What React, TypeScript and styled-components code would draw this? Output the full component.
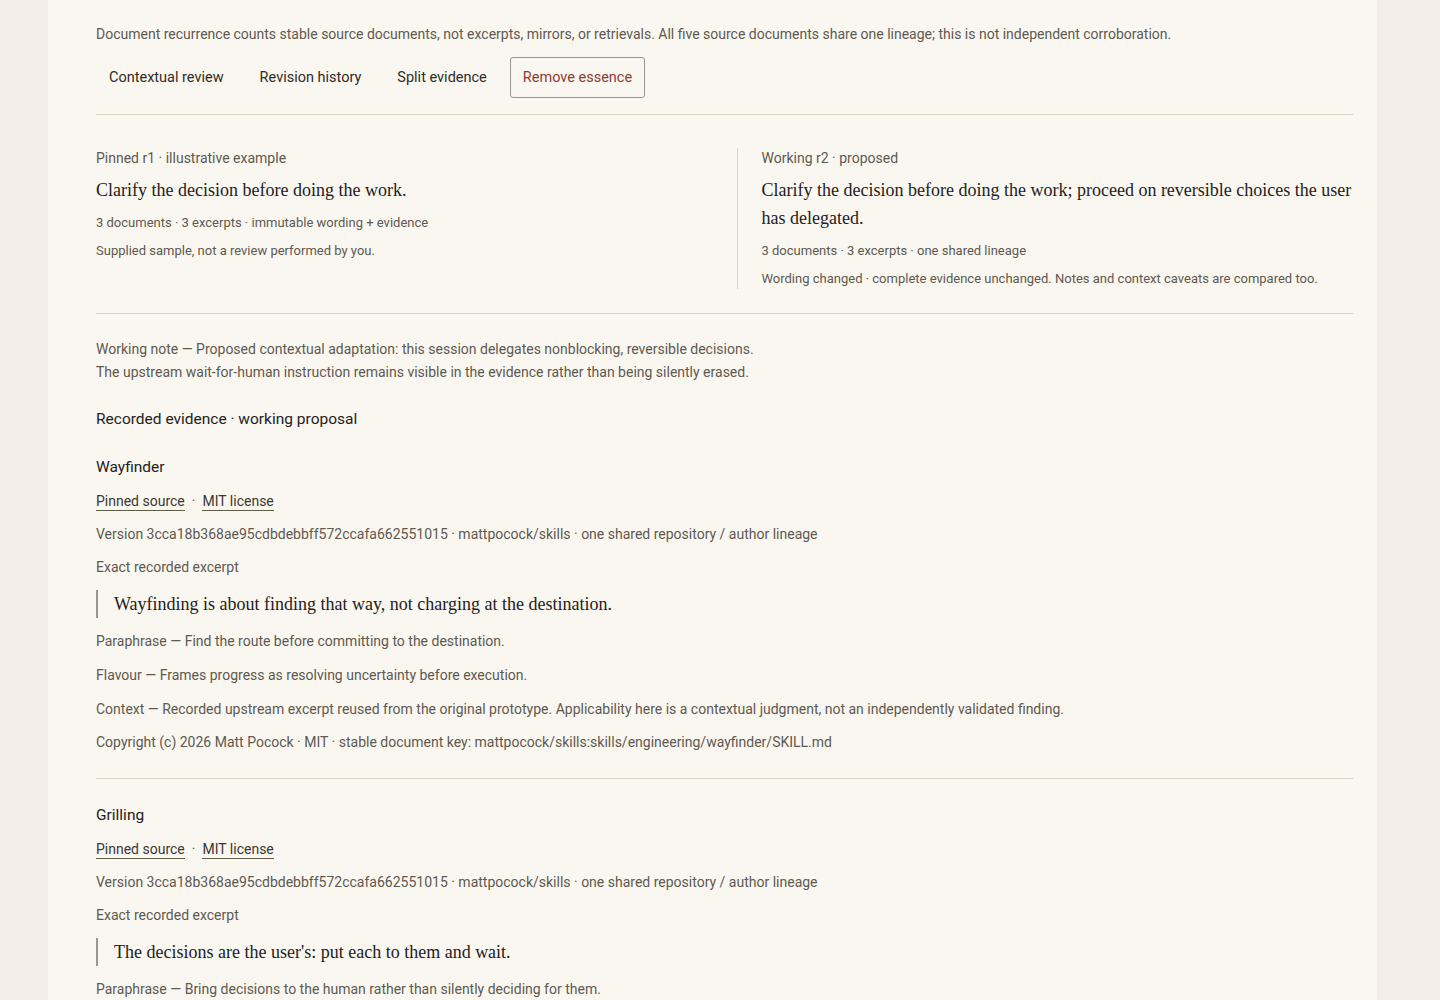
import styled, { createGlobalStyle } from "styled-components";

const GlobalStyle = createGlobalStyle`
  html, body {
    margin: 0;
    padding: 0;
    background: #f3efe8;
  }
  body {
    font-family: Roboto, "Liberation Sans", Arial, sans-serif;
    color: #2b2823;
  }
`;

const Page = styled.div`
  padding: 0 63px 48px 48px;
`;

const Card = styled.main`
  background: #faf7f0;
  padding: 24px 24px 48px 48px;
`;

const Lede = styled.p`
  margin: 0;
  font-size: 14px;
  line-height: 21px;
  color: #5e5951;
`;

const Toolbar = styled.div`
  display: flex;
  gap: 10px;
  padding: 12px 0 16px;
  border-bottom: 1px solid #d9d3c6;
`;

const Tab = styled.button<{ $danger?: boolean }>`
  font-family: inherit;
  font-size: 14.5px;
  line-height: 21px;
  padding: 9px 12px;
  background: transparent;
  border: 1px solid ${(p) => (p.$danger ? "#9c968a" : "transparent")};
  border-radius: 3px;
  color: ${(p) => (p.$danger ? "#8e3b30" : "#2f2b25")};
  cursor: pointer;
`;

const Compare = styled.section`
  display: grid;
  grid-template-columns: 1fr 1fr;
  gap: 24px;
  padding: 32.5px 0 24px;
  border-bottom: 1px solid #d9d3c6;
`;

const Revision = styled.div<{ $working?: boolean }>`
  display: flex;
  flex-direction: column;
  gap: 7.5px;
  ${(p) =>
    p.$working &&
    `
    border-left: 1px solid #d9d3c6;
    padding-left: 24px;
  `}
`;

const Small = styled.div<{ $meta?: boolean }>`
  font-size: ${(p) => (p.$meta ? "13px" : "14px")};
  line-height: 21px;
  color: #5e5951;
`;

const Wording = styled.div`
  font-family: "Liberation Serif", "Times New Roman", serif;
  font-size: 18px;
  line-height: 28px;
  color: #24211d;
`;

const Note = styled.div`
  padding: 24px 0 0;
  font-size: 14px;
  line-height: 23px;
  color: #5e5951;
`;

const SectionTitle = styled.h2`
  margin: 23px 0 0;
  font-size: 15.5px;
  line-height: 24px;
  font-weight: 400;
  color: #24211d;
`;

const Source = styled.article<{ $last?: boolean }>`
  display: flex;
  flex-direction: column;
  gap: 12px;
  padding: 24px 0 25px;
  border-bottom: ${(p) => (p.$last ? "none" : "1px solid #d9d3c6")};
`;

const SourceName = styled.h3`
  margin: 0;
  font-size: 15.5px;
  line-height: 24px;
  font-weight: 400;
  color: #24211d;
`;

const Links = styled.div`
  font-size: 14px;
  line-height: 21px;
  color: #5e5951;
`;

const Link = styled.a`
  color: #3b3830;
  text-decoration: none;
  border-bottom: 1px solid #5d5e44;
  padding-bottom: 1px;
`;

const Dot = styled.span`
  margin: 0 7px;
`;

const Line = styled.div<{ $loose?: boolean }>`
  font-size: 14px;
  line-height: ${(p) => (p.$loose ? "22px" : "21px")};
  color: #5e5951;
`;

const Quote = styled.blockquote`
  margin: 0;
  padding: 0 0 0 16px;
  border-left: 2px solid #9c968a;
  font-family: "Liberation Serif", "Times New Roman", serif;
  font-size: 18px;
  line-height: 28px;
  color: #24211d;
`;

type SourceData = {
  name: string;
  excerpt: string;
  paraphrase: string;
  flavour: string;
  context: string;
  key: string;
};

const version =
  "Version 3cca18b368ae95cdbdebbff572ccafa662551015 · mattpocock/skills · one shared repository / author lineage";

const sources: SourceData[] = [
  {
    name: "Wayfinder",
    excerpt: "Wayfinding is about finding that way, not charging at the destination.",
    paraphrase: "Find the route before committing to the destination.",
    flavour: "Frames progress as resolving uncertainty before execution.",
    context:
      "Recorded upstream excerpt reused from the original prototype. Applicability here is a contextual judgment, not an independently validated finding.",
    key: "mattpocock/skills:skills/engineering/wayfinder/SKILL.md",
  },
  {
    name: "Grilling",
    excerpt: "The decisions are the user's: put each to them and wait.",
    paraphrase: "Bring decisions to the human rather than silently deciding for them.",
    flavour: "Treats every open question as something the user must settle.",
    context:
      "Recorded upstream excerpt reused from the original prototype. Applicability here is a contextual judgment, not an independently validated finding.",
    key: "mattpocock/skills:skills/engineering/grilling/SKILL.md",
  },
];

function App() {
  return (
    <Page>
      <GlobalStyle />
      <Card>
        <Lede>
          Document recurrence counts stable source documents, not excerpts, mirrors, or retrievals. All
          five source documents share one lineage; this is not independent corroboration.
        </Lede>
        <Toolbar>
          <Tab>Contextual review</Tab>
          <Tab>Revision history</Tab>
          <Tab>Split evidence</Tab>
          <Tab $danger>Remove essence</Tab>
        </Toolbar>
        <Compare>
          <Revision>
            <Small>Pinned r1 · illustrative example</Small>
            <Wording>Clarify the decision before doing the work.</Wording>
            <Small $meta>3 documents · 3 excerpts · immutable wording + evidence</Small>
            <Small $meta>Supplied sample, not a review performed by you.</Small>
          </Revision>
          <Revision $working>
            <Small>Working r2 · proposed</Small>
            <Wording>
              Clarify the decision before doing the work; proceed on reversible choices the user has
              delegated.
            </Wording>
            <Small $meta>3 documents · 3 excerpts · one shared lineage</Small>
            <Small $meta>
              Wording changed · complete evidence unchanged. Notes and context caveats are compared too.
            </Small>
          </Revision>
        </Compare>
        <Note>
          Working note — Proposed contextual adaptation: this session delegates nonblocking, reversible
          decisions.
          <br />
          The upstream wait-for-human instruction remains visible in the evidence rather than being
          silently erased.
        </Note>
        <SectionTitle>Recorded evidence · working proposal</SectionTitle>
        {sources.map((s, i) => (
          <Source key={s.name} $last={i === sources.length - 1}>
            <SourceName>{s.name}</SourceName>
            <Links>
              <Link href="#">Pinned source</Link>
              <Dot>·</Dot>
              <Link href="#">MIT license</Link>
            </Links>
            <Line>{version}</Line>
            <Line>Exact recorded excerpt</Line>
            <Quote>{s.excerpt}</Quote>
            <Line $loose>Paraphrase — {s.paraphrase}</Line>
            <Line $loose>Flavour — {s.flavour}</Line>
            <Line $loose>Context — {s.context}</Line>
            <Line>Copyright (c) 2026 Matt Pocock · MIT · stable document key: {s.key}</Line>
          </Source>
        ))}
      </Card>
    </Page>
  );
}

export default App;
